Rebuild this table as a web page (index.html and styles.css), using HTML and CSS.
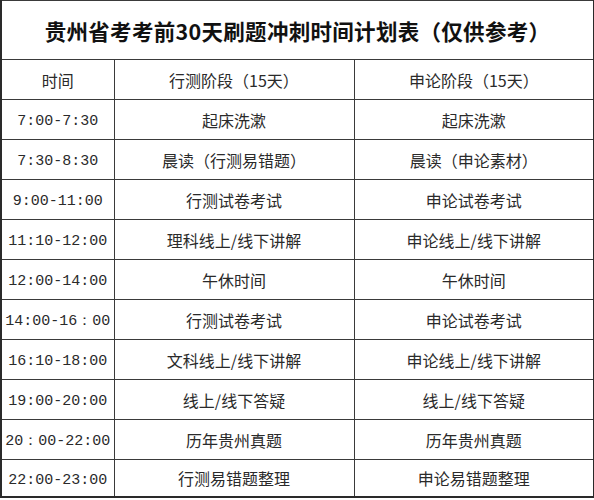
FILE: index.html
```html
<!DOCTYPE html>
<html lang="zh">
<head>
<meta charset="utf-8">
<title>贵州省考考前30天刷题冲刺时间计划表</title>
<link rel="stylesheet" href="styles.css">
</head>
<body>
<table class="plan">
  <colgroup>
    <col class="c-time">
    <col class="c-xc">
    <col class="c-sl">
  </colgroup>
  <tr class="title-row"><th colspan="3" class="title">贵州省考考前30天刷题冲刺时间计划表（仅供参考）</th></tr>
  <tr class="head"><td>时间</td><td>行测阶段（15天）</td><td>申论阶段（15天）</td></tr>
  <tr><td class="time">7:00-7:30</td><td>起床洗漱</td><td>起床洗漱</td></tr>
  <tr><td class="time">7:30-8:30</td><td>晨读（行测易错题）</td><td>晨读（申论素材）</td></tr>
  <tr><td class="time">9:00-11:00</td><td>行测试卷考试</td><td>申论试卷考试</td></tr>
  <tr><td class="time">11:10-12:00</td><td>理科线上/线下讲解</td><td>申论线上/线下讲解</td></tr>
  <tr><td class="time">12:00-14:00</td><td>午休时间</td><td>午休时间</td></tr>
  <tr><td class="time">14:00-16：00</td><td>行测试卷考试</td><td>申论试卷考试</td></tr>
  <tr><td class="time">16:10-18:00</td><td>文科线上/线下讲解</td><td>申论线上/线下讲解</td></tr>
  <tr><td class="time">19:00-20:00</td><td>线上/线下答疑</td><td>线上/线下答疑</td></tr>
  <tr><td class="time">20：00-22:00</td><td>历年贵州真题</td><td>历年贵州真题</td></tr>
  <tr class="last"><td class="time">22:00-23:00</td><td>行测易错题整理</td><td>申论易错题整理</td></tr>
</table>
</body>
</html>
```

FILE: styles.css
```css
html, body {
  margin: 0;
  padding: 0;
  background: #ffffff;
}

.plan {
  border-collapse: collapse;
  width: 593px;
  table-layout: fixed;
  border: 2px solid #2a2a2a;
  border-top: 1px solid #555;
  font-family: "Noto Sans CJK SC", "Noto Sans", sans-serif;
  color: #2a2a2a;
}

.c-time { width: 113px; }
.c-xc { width: 240px; }
.c-sl { width: 240px; }

.plan td, .plan th {
  border: 1px solid #3a3a3a;
  text-align: center;
  vertical-align: middle;
  padding: 0;
  height: 39px;
  font-size: 16px;
  font-weight: 400;
  line-height: 20px;
}

.plan th.title {
  height: 56px;
  font-size: 21.5px;
  font-weight: 700;
  color: #111;
  letter-spacing: 0.3px;
  padding-top: 2px;
}

.plan td.time {
  font-family: "Liberation Mono", "DejaVu Sans Mono", monospace;
  font-size: 15px;
  padding-top: 5px;
  height: 34px;
}

.plan tr.last td {
  height: 36px;
}

.plan tr.last td.time {
  height: 31px;
}
```
